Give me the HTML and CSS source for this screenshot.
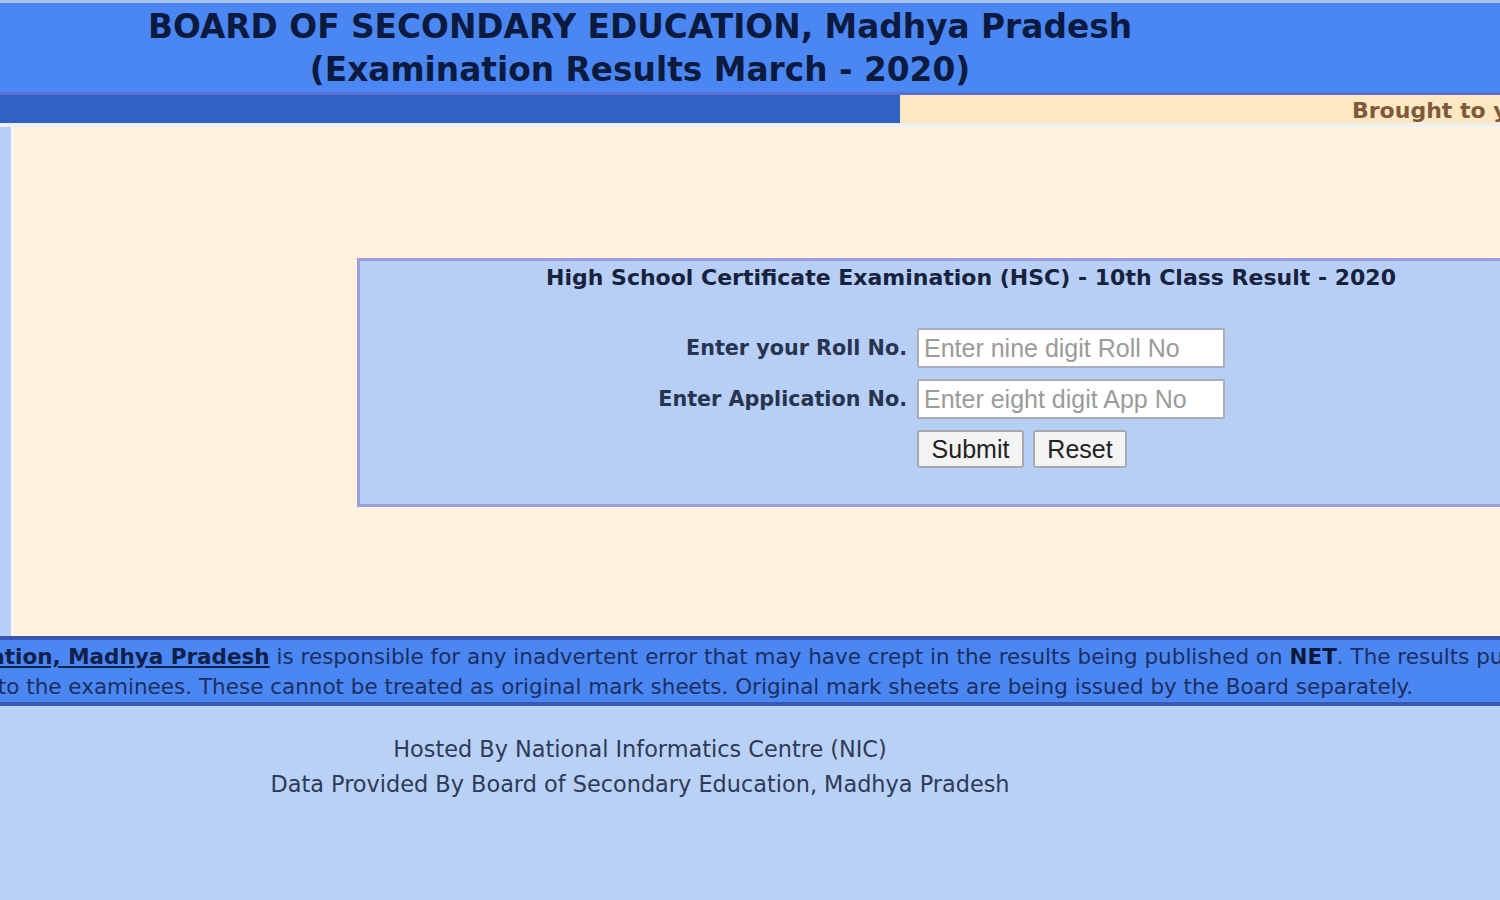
FILE: index.html
```html
<!DOCTYPE html>
<html lang="en">
<head>
<meta charset="utf-8">
<title>MPBSE Results 2020</title>
<link rel="stylesheet" href="styles.css">
</head>
<body>
<div class="page">
  <header class="masthead">
    <div class="masthead-inner">
      <h1 class="title">BOARD OF SECONDARY EDUCATION, Madhya Pradesh<br>(Examination Results March - 2020)</h1>
    </div>
  </header>
  <div class="subbar">
    <div class="subbar-left"></div>
    <div class="subbar-right"><span class="brought">Brought to you by National Informatics Centre</span></div>
  </div>
  <div class="sep"></div>
  <main class="main">
    <div class="rail"></div>
    <div class="content">
      <section class="formbox">
        <h2 class="formbox-title">High School Certificate Examination (HSC) - 10th Class Result - 2020</h2>
        <form class="form">
          <label class="label" for="roll">Enter your Roll No.</label>
          <input class="field" id="roll" type="text" placeholder="Enter nine digit Roll No">
          <label class="label" for="app">Enter Application No.</label>
          <input class="field" id="app" type="text" placeholder="Enter eight digit App No">
          <span class="label"></span>
          <div class="buttons">
            <button class="btn btn-submit" type="button">Submit</button>
            <button class="btn btn-reset" type="reset">Reset</button>
          </div>
        </form>
      </section>
    </div>
  </main>
  <section class="notice">
    <div class="notice-inner">
      <p class="notice-line notice-line-first">Neither NIC nor <a class="notice-link" href="#">Board of Secondary Education, Madhya Pradesh</a> is responsible for any inadvertent error that may have crept in the results being published on <b>NET</b>. The results published on net are for</p>
      <p class="notice-line">information to the examinees. These cannot be treated as original mark sheets. Original mark sheets are being issued by the Board separately.</p>
    </div>
  </section>
  <footer class="footer">
    <div class="footer-inner">
      <p class="footer-line">Hosted By National Informatics Centre (NIC)</p>
      <p class="footer-line">Data Provided By Board of Secondary Education, Madhya Pradesh</p>
    </div>
  </footer>
</div>
</body>
</html>
```

FILE: styles.css
```css
html, body {
  margin: 0;
  padding: 0;
}
body {
  width: 1500px;
  height: 900px;
  overflow: hidden;
  background: #bad1f6;
  font-family: "DejaVu Sans", Verdana, sans-serif;
}
.page {
  width: 1500px;
  overflow: hidden;
}
.masthead {
  background: #4a87f2;
  border-top: 3px solid #a9c2ee;
  border-bottom: 3px solid #5a6fd0;
}
.masthead-inner {
  width: 1280px;
  padding: 3px 0 0;
}
.title {
  margin: 0;
  text-align: center;
  font-size: 32.8px;
  line-height: 43px;
  font-weight: bold;
  color: #0b1a3e;
  white-space: nowrap;
}
.subbar {
  display: grid;
  grid-template-columns: 900px 1fr;
  height: 28px;
}
.subbar-left {
  background: #2f62c4;
}
.subbar-right {
  background: #fde8c3;
  padding-left: 452px;
  overflow: hidden;
  white-space: nowrap;
}
.brought {
  font-size: 22px;
  font-weight: bold;
  line-height: 32px;
  color: #7d5a3c;
}
.sep {
  height: 4px;
  background: #eef0f4;
}
.main {
  display: flex;
  background: #fff2dc;
}
.rail {
  width: 11px;
  flex-shrink: 0;
  background: #b8d0f8;
  border-right: 3px solid #f7f6f0;
}
.content {
  flex: 1;
  overflow: hidden;
  padding: 131px 0 129px 343px;
}
.formbox {
  width: 1222px;
  background: #b8cff5;
  border: 3px solid #9c9ce0;
  padding: 2px 0 36px;
}
.formbox-title {
  margin: 0;
  text-align: center;
  font-size: 22px;
  line-height: 30px;
  font-weight: bold;
  color: #17223e;
  white-space: nowrap;
}
.form {
  display: grid;
  grid-template-columns: 547px 308px;
  column-gap: 10px;
  row-gap: 11px;
  margin-top: 35px;
  align-items: center;
}
.label {
  text-align: right;
  font-size: 20.7px;
  font-weight: bold;
  color: #263450;
  white-space: nowrap;
}
.field {
  box-sizing: border-box;
  width: 308px;
  height: 40px;
  margin: 0;
  padding: 0 5px;
  border: 2px solid #a9adb6;
  border-radius: 2px;
  background: #ffffff;
  font-family: "Liberation Sans", Arial, sans-serif;
  font-size: 25px;
  color: #222;
}
.field::placeholder {
  color: #9b9b9b;
}
.buttons {
  display: flex;
  gap: 9px;
}
.btn {
  box-sizing: border-box;
  height: 38px;
  margin: 0;
  padding: 0;
  border: 2px solid #a7a9ad;
  border-radius: 3px;
  background: #f3f3f3;
  font-family: "Liberation Sans", Arial, sans-serif;
  font-size: 25px;
  color: #222;
}
.btn-submit {
  width: 107px;
}
.btn-reset {
  width: 94px;
}
.notice {
  background: #4a87f2;
  border-top: 4px solid #3a57b4;
  border-bottom: 4px solid #3a57b4;
  overflow: hidden;
}
.notice-inner {
  width: 1280px;
  display: flex;
  flex-direction: column;
  align-items: center;
  padding: 2px 0 0;
}
.notice-line {
  margin: 0;
  white-space: nowrap;
  font-size: 21.5px;
  line-height: 30px;
  color: #1c2e60;
}
.notice-line-first {
  padding-right: 32px;
}
.notice-link {
  color: #10204a;
  font-weight: bold;
  text-decoration: underline;
}
.notice-line b {
  color: #0c1838;
}
.footer-inner {
  width: 1280px;
  padding-top: 26px;
  text-align: center;
}
.footer-line {
  margin: 0;
  font-size: 22.4px;
  line-height: 35px;
  color: #2d3a58;
  white-space: nowrap;
}
```
